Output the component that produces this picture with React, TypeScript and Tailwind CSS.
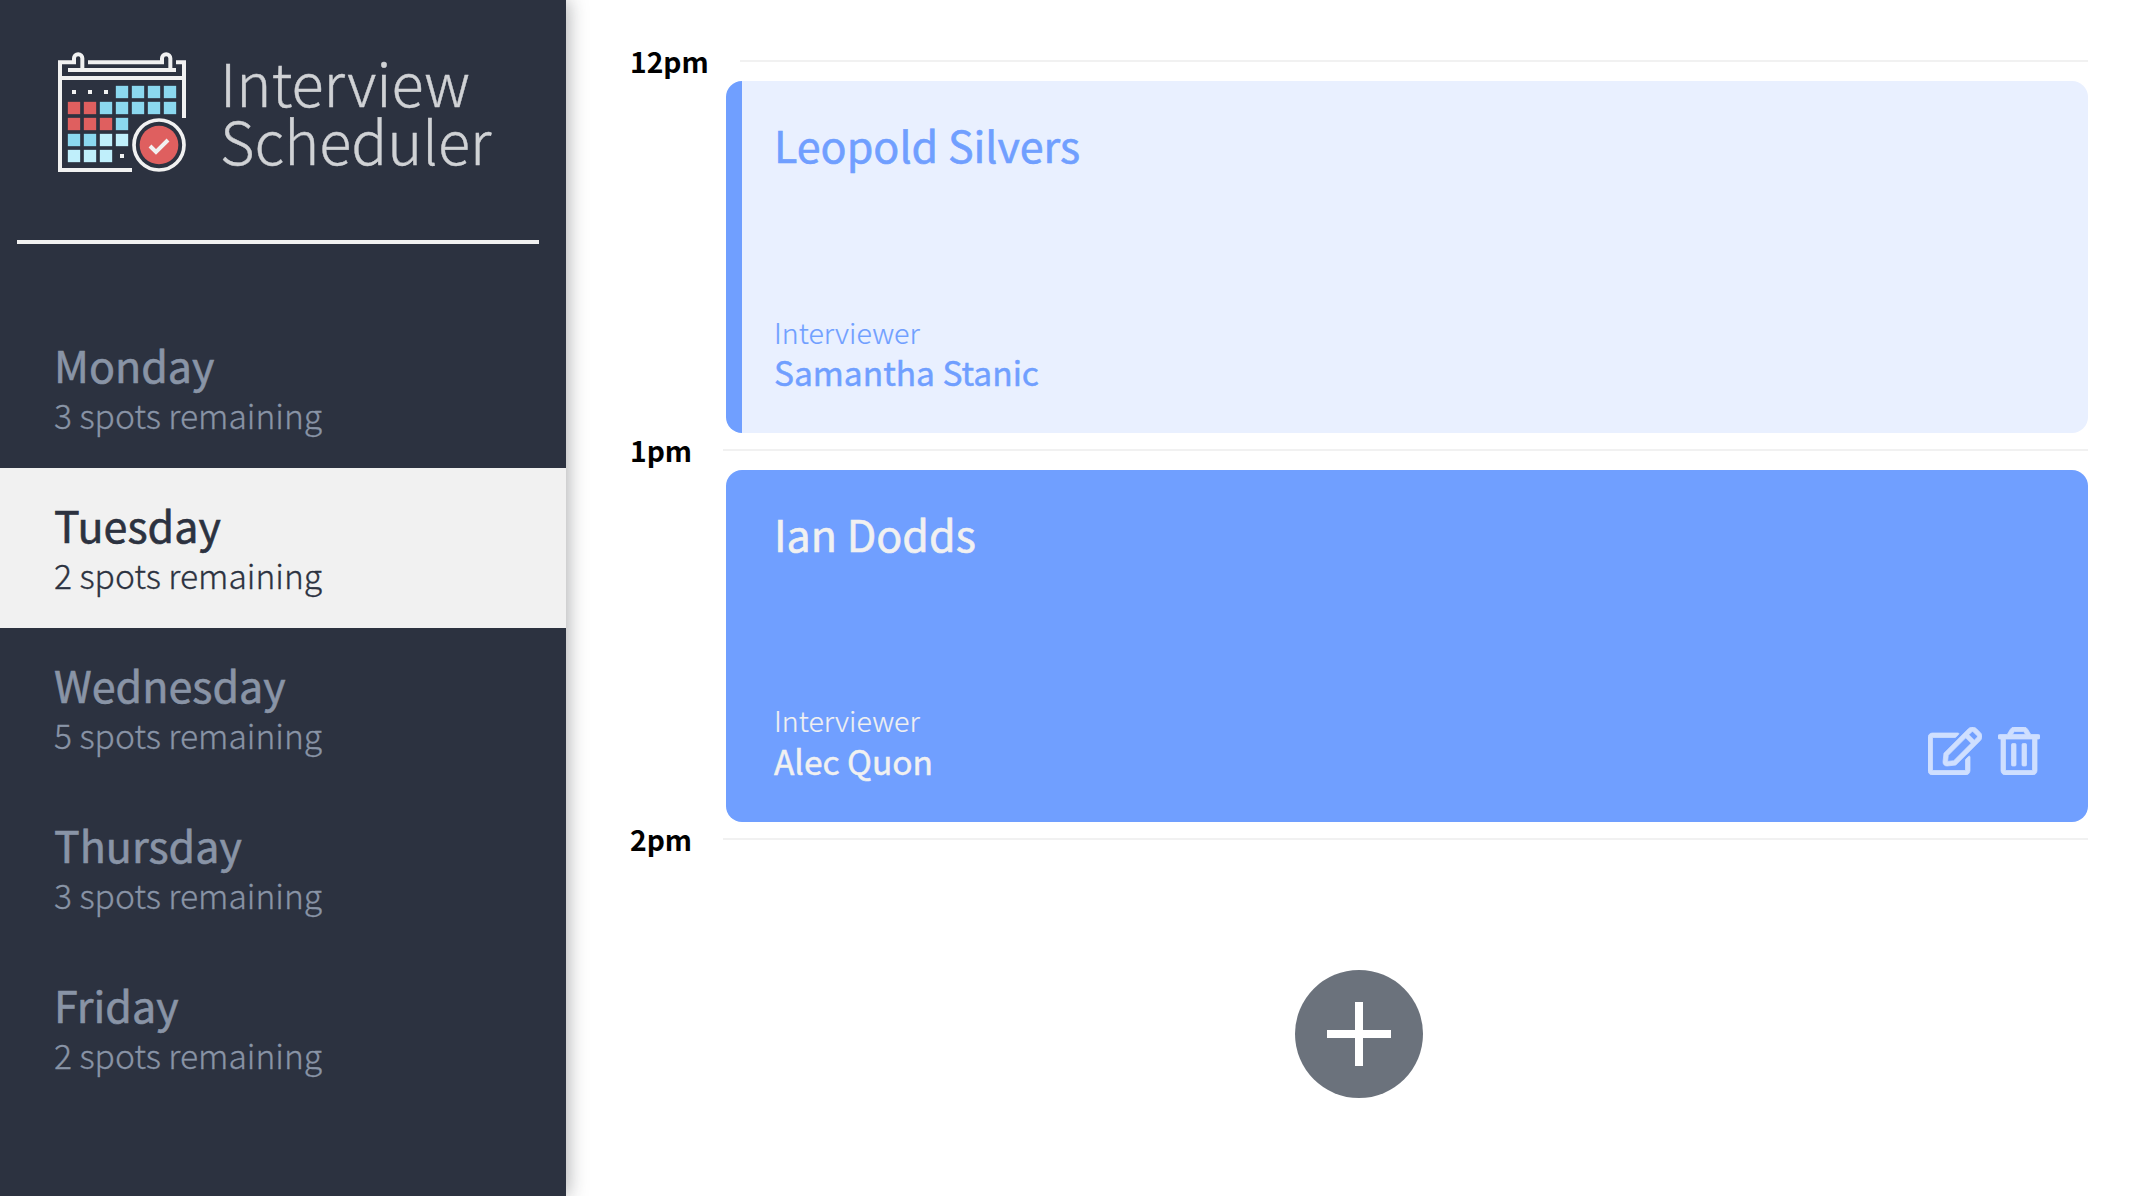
import React from "react";
import { FaRegEdit, FaRegTrashAlt } from "react-icons/fa";

type Day = { name: string; spots: number };
type Interview = { student: string; interviewer: string };

const days: Day[] = [
  { name: "Monday", spots: 3 },
  { name: "Tuesday", spots: 2 },
  { name: "Wednesday", spots: 5 },
  { name: "Thursday", spots: 3 },
  { name: "Friday", spots: 2 },
];

// r = red, b = blue, p = pale blue, d = dot, space = nothing
const calendarRows = ["dddbbbb", "rrbbbbb", "rrrb   ", "bbpp   ", "pppd   "];
const cellColors: Record<string, string> = {
  r: "#df5f5f",
  b: "#8bd8ef",
  p: "#c0effb",
  d: "#f1f1f1",
};

function CalendarLogo() {
  return (
    <svg
      viewBox="84 66 384 360"
      className="h-[120px] w-[128px] shrink-0"
      fill="none"
      stroke="#f1f1f1"
      strokeWidth="12"
    >
      <path d="M306 420H90V97H132V85a12.5 12.5 0 0 1 25 0V120" />
      <path d="M174 97H396V85a12.5 12.5 0 0 1 25 0V120" />
      <path d="M438 97H462V264M114 120H438M90 144H462" />
      {calendarRows.flatMap((row, y) =>
        row.split("").map((cell, x) => {
          if (cell === " ") return null;
          const size = cell === "d" ? 12 : 37;
          return (
            <rect
              key={`${x}-${y}`}
              x={132 + x * 48 - size / 2}
              y={186 + y * 48 - size / 2}
              width={size}
              height={size}
              fill={cellColors[cell]}
              stroke="none"
            />
          );
        }),
      )}
      <circle cx="387" cy="345" r="75" strokeWidth="11" />
      <circle cx="387" cy="345" r="58" fill="#df5f5f" stroke="none" />
      <path d="M360 348L378 366L414 330" />
    </svg>
  );
}

function DayItem({ day, selected }: { day: Day; selected: boolean }) {
  return (
    <li
      className={
        selected
          ? "h-40 bg-[#f1f1f1] pt-[30px] pl-[54px] text-[#2c3240]"
          : "h-40 pt-[30px] pl-[54px] text-[#8994a6]"
      }
    >
      <h2 className="text-[43px] leading-[52px] [-webkit-text-stroke:0.6px]">{day.name}</h2>
      <h3 className="text-[33.6px] leading-[50px] font-light [-webkit-text-stroke:0.3px]">
        {day.spots} spots remaining
      </h3>
    </li>
  );
}

function HourMark({ time }: { time: string }) {
  return (
    <header className="flex h-[34px] items-center gap-[31px]">
      <h4 className="text-[28.25px] leading-[34px] font-bold text-black">{time}</h4>
      <hr className="h-0.5 flex-1 border-0 bg-[#f1f1f1]" />
    </header>
  );
}

function Appointment({ interview, active }: { interview: Interview; active?: boolean }) {
  return (
    <section
      className={
        active
          ? "mt-[3px] ml-24 flex h-[352px] justify-between rounded-2xl bg-[#709fff] pt-[37px] pr-12 pb-[39px] pl-12 text-[#f1f1f1]"
          : "mt-[3px] ml-24 flex h-[352px] justify-between overflow-hidden rounded-2xl border-l-16 border-[#709fff] bg-[#e9f0ff] pt-[37px] pr-12 pb-[39px] pl-8 text-[#709fff]"
      }
    >
      <div className="flex flex-col justify-between">
        <h2 className="text-[43px] leading-[52px] [-webkit-text-stroke:0.6px]">
          {interview.student}
        </h2>
        <div>
          <h4
            className={
              active
                ? "text-[28.6px] leading-[38px] font-light [-webkit-text-stroke:0.2px]"
                : "text-[28.6px] leading-9 font-light [-webkit-text-stroke:0.2px]"
            }
          >
            Interviewer
          </h4>
          <h3 className="text-[33.5px] leading-[44px] [-webkit-text-stroke:0.5px]">
            {interview.interviewer}
          </h3>
        </div>
      </div>
      {active && (
        <div className="mb-2 flex items-end gap-4 self-end text-[#cfdfff]">
          <FaRegEdit className="h-12 w-[54px]" stroke="currentColor" strokeWidth="8" />
          <FaRegTrashAlt className="h-12 w-[42px]" stroke="currentColor" strokeWidth="8" />
        </div>
      )}
    </section>
  );
}

export default function App() {
  return (
    <main className="flex h-[1196px] w-[2136px] overflow-hidden bg-white font-['Noto_Sans_CJK_SC','Noto_Sans',sans-serif] font-normal">
      <aside className="z-10 h-full w-[566px] shrink-0 bg-[#2c3240] shadow-[2px_0_18px_rgba(30,33,40,0.36)]">
        <div className="flex h-[172px] items-start gap-[34px] pt-[52px] pl-[58px]">
          <CalendarLogo />
          <h1 className="text-[59.5px] leading-[58px] font-light text-[#d0d2d5] [-webkit-text-stroke:0.4px]">
            Interview
            <br />
            Scheduler
          </h1>
        </div>
        <hr className="mt-[68px] mr-[27px] ml-[17px] h-1 border-0 bg-[#f1f1f1]" />
        <ul className="mt-16">
          {days.map((day) => (
            <DayItem key={day.name} day={day} selected={day.name === "Tuesday"} />
          ))}
        </ul>
      </aside>
      <section className="flex-1 pt-11 pr-12 pl-16">
        <HourMark time="12pm" />
        <Appointment interview={{ student: "Leopold Silvers", interviewer: "Samantha Stanic" }} />
        <HourMark time="1pm" />
        <Appointment interview={{ student: "Ian Dodds", interviewer: "Alec Quon" }} active />
        <HourMark time="2pm" />
        <div className="mt-[114px] flex justify-center">
          <button className="flex size-32 items-center justify-center rounded-full bg-[#6b727c]">
            <svg viewBox="0 0 64 64" className="size-16" stroke="#fff" strokeWidth="8">
              <path d="M32 0V64M0 32H64" />
            </svg>
          </button>
        </div>
      </section>
    </main>
  );
}
